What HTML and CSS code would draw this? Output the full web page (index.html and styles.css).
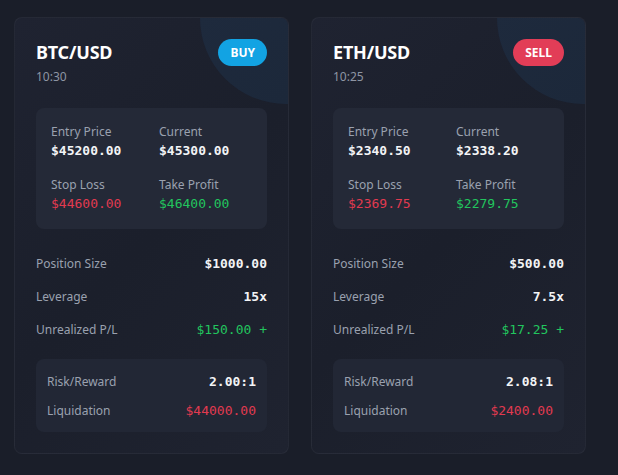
FILE: index.html
```html
<!DOCTYPE html>
<html>
<head>
<meta charset="utf-8">
<link rel="stylesheet" href="styles.css">
</head>
<body>
<div class="grid">
  <div class="card">
    <div class="glow"></div>
    <div class="head">
      <div>
        <div class="pair">BTC/USD</div>
        <div class="time">10:30</div>
      </div>
      <span class="badge buy">BUY</span>
    </div>
    <div class="prices">
      <div class="cell"><div class="lbl">Entry Price</div><div class="val">$45200.00</div></div>
      <div class="cell"><div class="lbl">Current</div><div class="val">$45300.00</div></div>
      <div class="cell"><div class="lbl">Stop Loss</div><div class="val red">$44600.00</div></div>
      <div class="cell"><div class="lbl">Take Profit</div><div class="val green">$46400.00</div></div>
    </div>
    <div class="rows">
      <div class="row"><span class="lbl2">Position Size</span><span class="val">$1000.00</span></div>
      <div class="row"><span class="lbl2">Leverage</span><span class="val">15x</span></div>
      <div class="row"><span class="lbl2">Unrealized P/L</span><span class="val green thin">$150.00 +</span></div>
    </div>
    <div class="risk">
      <div class="row"><span class="lbl2">Risk/Reward</span><span class="val">2.00:1</span></div>
      <div class="row"><span class="lbl2">Liquidation</span><span class="val red">$44000.00</span></div>
    </div>
  </div>
  <div class="card">
    <div class="glow"></div>
    <div class="head">
      <div>
        <div class="pair">ETH/USD</div>
        <div class="time">10:25</div>
      </div>
      <span class="badge sell">SELL</span>
    </div>
    <div class="prices">
      <div class="cell"><div class="lbl">Entry Price</div><div class="val">$2340.50</div></div>
      <div class="cell"><div class="lbl">Current</div><div class="val">$2338.20</div></div>
      <div class="cell"><div class="lbl">Stop Loss</div><div class="val red">$2369.75</div></div>
      <div class="cell"><div class="lbl">Take Profit</div><div class="val green">$2279.75</div></div>
    </div>
    <div class="rows">
      <div class="row"><span class="lbl2">Position Size</span><span class="val">$500.00</span></div>
      <div class="row"><span class="lbl2">Leverage</span><span class="val">7.5x</span></div>
      <div class="row"><span class="lbl2">Unrealized P/L</span><span class="val green thin">$17.25 +</span></div>
    </div>
    <div class="risk">
      <div class="row"><span class="lbl2">Risk/Reward</span><span class="val">2.08:1</span></div>
      <div class="row"><span class="lbl2">Liquidation</span><span class="val red">$2400.00</span></div>
    </div>
  </div>
</div>
</body>
</html>
```
FILE: styles.css
```css
* { box-sizing: border-box; }
html, body { margin: 0; padding: 0; }
body {
  background: #1a1e29;
  font-family: "Noto Sans", "Open Sans", sans-serif;
  color: #f1f3f6;
  width: 618px;
  height: 475px;
  overflow: hidden;
}
.grid {
  display: flex;
  gap: 22px;
  padding: 17px 14px;
}
.card {
  position: relative;
  overflow: hidden;
  width: 275px;
  height: 437px;
  padding: 21px;
  border: 1px solid rgba(255,255,255,0.045);
  border-radius: 8px;
  background: linear-gradient(135deg, #1f2331 0%, #1b1f2b 50%, #1f2330 100%);
}
.glow {
  position: absolute;
  width: 172px;
  height: 172px;
  top: -86px;
  right: -84px;
  border-radius: 50%;
  background: rgba(40, 110, 170, 0.12);
}
.head {
  position: relative;
  display: flex;
  justify-content: space-between;
  align-items: flex-start;
}
.pair {
  font-size: 18px;
  font-weight: 700;
  line-height: 27px;
  color: #ffffff;
  letter-spacing: -0.2px;
}
.time {
  margin-top: 3px;
  font-size: 12px;
  line-height: 16px;
  color: #8e95a3;
}
.badge {
  display: inline-block;
  height: 27px;
  line-height: 27px;
  padding: 0 12px;
  border-radius: 14px;
  font-size: 12px;
  font-weight: 700;
  color: #fff;
}
.buy { background: #12a3e3; }
.sell { background: #e23d57; }
.prices {
  position: relative;
  margin-top: 23px;
  background: #242937;
  border-radius: 8px;
  padding: 15px;
  display: grid;
  grid-template-columns: 1fr 1fr;
  column-gap: 15px;
  row-gap: 15px;
}
.lbl {
  font-size: 12px;
  line-height: 17px;
  color: #9aa1af;
}
.lbl2 {
  font-size: 12px;
  color: #9aa1af;
}
.val {
  font-family: "DejaVu Sans Mono", "Liberation Mono", monospace;
  font-weight: 700;
  font-size: 13px;
  line-height: 21px;
  color: #f3f4f6;
}
.thin { font-weight: 400; }
.red { color: #e23a50; font-weight: 400; }
.green { color: #22c55e; }
.cell .green { font-weight: 400; }
.rows {
  margin-top: 20px;
  display: flex;
  flex-direction: column;
  gap: 5px;
}
.row {
  display: flex;
  justify-content: space-between;
  align-items: center;
  height: 28px;
}
.risk {
  margin-top: 16px;
  background: #222735;
  border-radius: 8px;
  padding: 12px 11px;
  display: flex;
  flex-direction: column;
  gap: 9px;
}
.risk .row { height: 20px; }
```
